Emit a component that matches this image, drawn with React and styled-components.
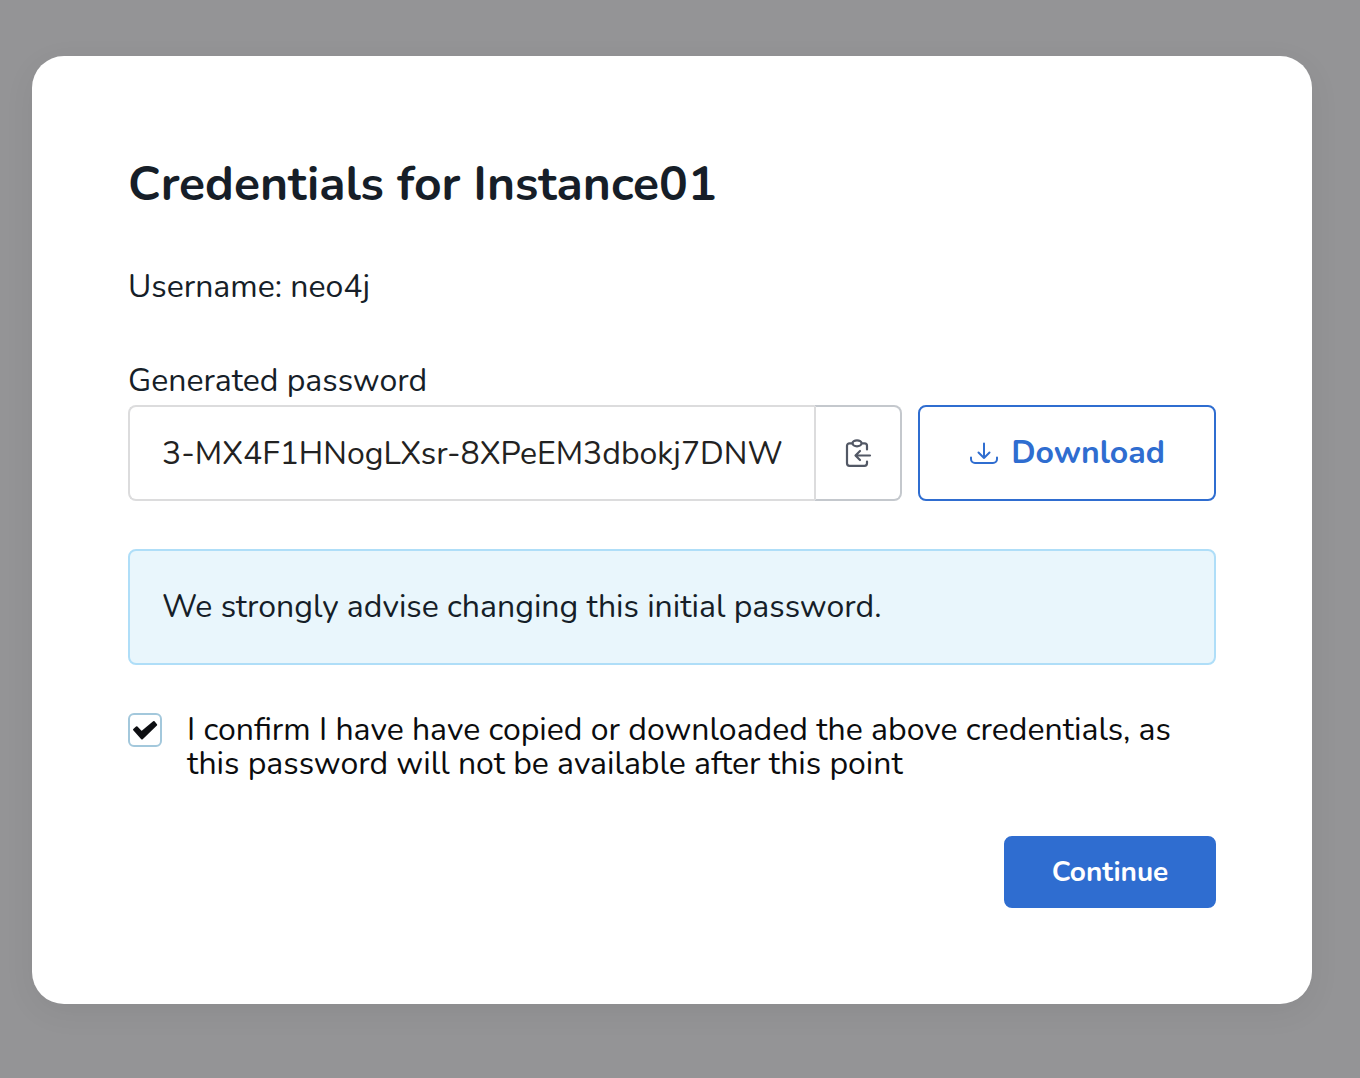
import React, { useState } from "react";
import styled, { createGlobalStyle } from "styled-components";

const GlobalStyle = createGlobalStyle`
  * {
    box-sizing: border-box;
  }

  body {
    margin: 0;
    background-color: #949496;
    color: #161e28;
    font-family: "Nunito", "Lato", sans-serif;
    font-size: 32px;
  }
`;

const Overlay = styled.div`
  min-height: 100vh;
  padding: 56px 48px 56px 32px;
`;

const Dialog = styled.main`
  padding: 96px;
  border-radius: 32px;
  background-color: #ffffff;
  box-shadow: 0 8px 32px rgba(0, 0, 0, 0.06);
`;

const Title = styled.h1`
  margin: 0 0 48px;
  font-size: 48px;
  line-height: 64px;
  font-weight: 700;
`;

const Username = styled.p`
  margin: 0 0 48px;
  line-height: 46px;
`;

const Label = styled.label`
  display: block;
  margin-bottom: 1px;
  line-height: 46px;
`;

const PasswordRow = styled.div`
  display: flex;
  gap: 16px;
  height: 96px;
`;

const PasswordGroup = styled.div`
  display: flex;
  flex: 1;
  min-width: 0;
`;

const PasswordInput = styled.input`
  flex: 1;
  min-width: 0;
  padding: 0 32px;
  border: 2px solid #dcdcdd;
  border-right: none;
  border-radius: 8px 0 0 8px;
  background-color: #ffffff;
  color: #222222;
  font: inherit;
  outline: none;
`;

const Button = styled.button`
  display: flex;
  align-items: center;
  justify-content: center;
  border: 2px solid #2f6dd0;
  border-radius: 8px;
  font: inherit;
  font-weight: 700;
  cursor: pointer;
`;

const CopyButton = styled(Button)`
  width: 88px;
  border-color: #c4c8cd;
  border-left-color: #dcdcdd;
  border-radius: 0 8px 8px 0;
  background-color: #ffffff;
  color: #525865;
`;

const DownloadButton = styled(Button)`
  gap: 12px;
  width: 298px;
  padding: 0 8px 2px;
  background-color: #ffffff;
  color: #2f6dd0;
`;

const ContinueButton = styled(Button)`
  width: 212px;
  height: 72px;
  margin-left: auto;
  background-color: #2f6dd0;
  color: #ffffff;
  font-size: 28px;

  &:disabled {
    opacity: 0.5;
  }
`;

const Notice = styled.div`
  margin: 48px 0;
  padding: 32px;
  border: 2px solid #afdef8;
  border-radius: 8px;
  background-color: #e9f6fc;
  line-height: 48px;
`;

const Confirm = styled.div`
  display: flex;
  gap: 25px;
  margin-bottom: 55px;
  color: #0b0c0e;
`;

const ConfirmLabel = styled.label`
  line-height: 34px;
`;

const CheckboxWrapper = styled.div`
  display: grid;
  flex: none;
  width: 34px;
  height: 34px;

  > * {
    grid-area: 1 / 1;
  }
`;

const Checkbox = styled.input`
  appearance: none;
  width: 34px;
  height: 34px;
  margin: 0;
  border: 2px solid #a3c8dc;
  border-radius: 6px;
  background-color: #ffffff;
`;

const CheckMark = styled.svg`
  width: 34px;
  height: 34px;
  pointer-events: none;
`;

const ClipboardIcon = () => (
  <svg
    width="32"
    height="32"
    viewBox="0 0 32 32"
    fill="none"
    stroke="currentColor"
    strokeWidth="2.2"
    strokeLinecap="round"
    strokeLinejoin="round"
    aria-hidden="true"
  >
    <path d="M10.5 6.3H7.5A2.5 2.5 0 0 0 5 8.800V26.300A2.500 2.500 0 0 0 7.500 28.800H22.500A2.500 2.500 0 0 0 25 26.300V24.500" />
    <path d="M20.500 6.300H22.500A2.500 2.500 0 0 1 25 8.800V12.500" />
    <ellipse cx="15" cy="6.300" rx="4.500" ry="3" />
    <path d="M28 18.500H13.800M18 14L13.500 18.500L18 23" />
  </svg>
);

const DownloadIcon = () => (
  <svg
    width="30"
    height="32"
    viewBox="0 0 30 32"
    fill="none"
    stroke="currentColor"
    strokeWidth="2"
    strokeLinecap="round"
    strokeLinejoin="round"
    aria-hidden="true"
  >
    <path d="M15 7.500V22M9.500 16.500L15 22L20.500 16.500" />
    <path d="M2 21.500V23A4 4 0 0 0 6 27H24A4 4 0 0 0 28 23V21.500" />
  </svg>
);

const App = () => {
  const [confirmed, setConfirmed] = useState(true);
  const password = "3-MX4F1HNogLXsr-8XPeEM3dbokj7DNW";

  return (
    <>
      <GlobalStyle />
      <Overlay>
        <Dialog>
          <Title>Credentials for Instance01</Title>
          <Username>Username: neo4j</Username>
          <Label htmlFor="password">Generated password</Label>
          <PasswordRow>
            <PasswordGroup>
              <PasswordInput
                id="password"
                type="text"
                value={password}
                readOnly
              />
              <CopyButton
                type="button"
                aria-label="Copy password"
                onClick={() => navigator.clipboard.writeText(password)}
              >
                <ClipboardIcon />
              </CopyButton>
            </PasswordGroup>
            <DownloadButton type="button">
              <DownloadIcon />
              Download
            </DownloadButton>
          </PasswordRow>
          <Notice>We strongly advise changing this initial password.</Notice>
          <Confirm>
            <CheckboxWrapper>
              <Checkbox
                id="confirm"
                type="checkbox"
                checked={confirmed}
                onChange={(e) => setConfirmed(e.target.checked)}
              />
              {confirmed && (
                <CheckMark viewBox="0 0 34 34" aria-hidden="true">
                  <path
                    d="M6 16.700L8.700 14.200L13.500 19.200L25.800 9L28.200 11.800L14 25.500Z"
                    fill="#0e0f12"
                    stroke="#0e0f12"
                    strokeWidth="2"
                    strokeLinejoin="round"
                  />
                </CheckMark>
              )}
            </CheckboxWrapper>
            <ConfirmLabel htmlFor="confirm">
              I confirm I have have copied or downloaded the above credentials,
              as this password will not be available after this point
            </ConfirmLabel>
          </Confirm>
          <ContinueButton type="button" disabled={!confirmed}>
            Continue
          </ContinueButton>
        </Dialog>
      </Overlay>
    </>
  );
};

export default App;
